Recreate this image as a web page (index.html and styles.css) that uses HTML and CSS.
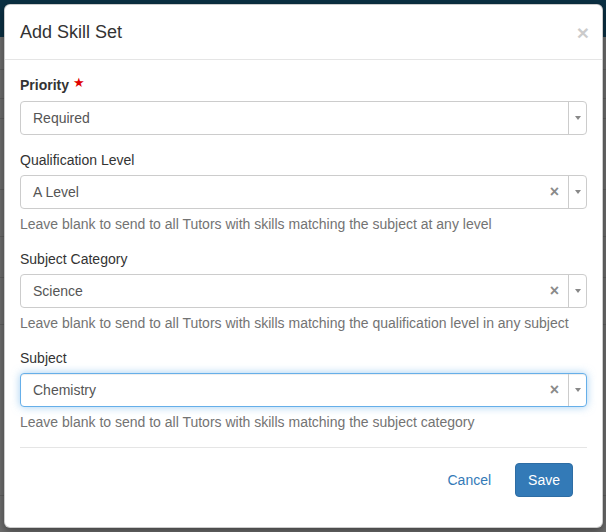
FILE: index.html
```html
<!DOCTYPE html>
<html lang="en">
<head>
<meta charset="utf-8">
<title>Add Skill Set</title>
<link rel="stylesheet" href="styles.css">
</head>
<body>
<div class="page">
  <div class="topbar"></div>
  <div class="rows">
    <div class="row r1"></div>
    <div class="row r2"></div>
    <div class="row r3"></div>
    <div class="row r4"></div>
    <div class="row r5"></div>
    <div class="row r6"></div>
    <div class="row r7"></div>
    <div class="row r8"></div>
  </div>
</div>

<div class="modal">
  <div class="modal-header">
    <h4 class="modal-title">Add Skill Set</h4>
    <span class="close">×</span>
  </div>
  <div class="modal-body">
    <div class="form-group">
      <label class="label bold">Priority <span class="req">★</span></label>
      <div class="select">
        <span class="value">Required</span>
        <span class="arrow"><i></i></span>
      </div>
    </div>
    <div class="form-group">
      <label class="label">Qualification Level</label>
      <div class="select">
        <span class="value">A Level</span>
        <span class="clear">×</span>
        <span class="arrow"><i></i></span>
      </div>
      <p class="help">Leave blank to send to all Tutors with skills matching the subject at any level</p>
    </div>
    <div class="form-group">
      <label class="label">Subject Category</label>
      <div class="select">
        <span class="value">Science</span>
        <span class="clear">×</span>
        <span class="arrow"><i></i></span>
      </div>
      <p class="help">Leave blank to send to all Tutors with skills matching the qualification level in any subject</p>
    </div>
    <div class="form-group">
      <label class="label">Subject</label>
      <div class="select focused">
        <span class="value">Chemistry</span>
        <span class="clear">×</span>
        <span class="arrow"><i></i></span>
      </div>
      <p class="help">Leave blank to send to all Tutors with skills matching the subject category</p>
    </div>
    <div class="modal-footer">
      <button class="btn btn-link">Cancel</button>
      <button class="btn btn-primary">Save</button>
    </div>
  </div>
</div>
</body>
</html>
```

FILE: styles.css
```css
html, body {
  margin: 0;
  padding: 0;
}
body {
  width: 606px;
  height: 532px;
  overflow: hidden;
  background: #6d6d6d;
  font-family: "Liberation Sans", Arial, Helvetica, sans-serif;
  font-size: 14px;
  line-height: 20px;
  color: #333;
  position: relative;
}
.page {
  display: flex;
  flex-direction: column;
}
.topbar {
  height: 37px;
  background: #0b3043;
}
.rows {
  display: flex;
  flex-direction: column;
}
.row {
  border-bottom: 1px solid #5f5f5f;
}
.r1 { height: 32px; }
.r2 { height: 28px; }
.r3 { height: 19px; }
.r4 { height: 70px; }
.r5 { height: 46px; }
.r6 { height: 40px; }
.r7 { height: 46px; }
.r8 { height: 170px; }

.modal {
  position: absolute;
  left: 4px;
  top: 4px;
  width: 597px;
  background: #fff;
  border: 1px solid rgba(0,0,0,0.2);
  border-radius: 6px;
  box-shadow: 0 3px 9px rgba(0,0,0,0.4);
}
.modal-header {
  display: flex;
  align-items: flex-start;
  justify-content: space-between;
  padding: 15px;
  border-bottom: 1px solid #e5e5e5;
}
.modal-title {
  margin: 0;
  font-size: 18px;
  line-height: 24px;
  font-weight: normal;
  color: #333;
}
.close {
  font-size: 21px;
  font-weight: bold;
  line-height: 20px;
  color: #000;
  opacity: 0.2;
  margin-top: 3px;
  margin-right: -2px;
}
.modal-body {
  padding: 15px 15px 15px;
}
.form-group {
  margin-bottom: 15px;
}
.label {
  display: block;
  margin-bottom: 5px;
  font-weight: normal;
  color: #333;
}
.label.bold {
  font-weight: bold;
}
.req {
  color: #e00000;
  font-size: 13px;
  position: relative;
  top: -3px;
  font-weight: normal;
}
.select {
  display: flex;
  align-items: stretch;
  height: 34px;
  box-sizing: border-box;
  border: 1px solid #ccc;
  border-radius: 4px;
  background: #fff;
}
.select.focused {
  border-color: #66afe9;
  box-shadow: inset 0 1px 1px rgba(0,0,0,0.075), 0 0 8px rgba(102,175,233,0.6);
}
.value {
  flex: 1;
  padding-left: 12px;
  line-height: 32px;
  color: #555;
}
.clear {
  font-weight: bold;
  color: #8a8a8a;
  font-size: 16px;
  line-height: 32px;
  padding-right: 9px;
}
.arrow {
  width: 17px;
  border-left: 1px solid #ccc;
  display: flex;
  align-items: center;
  justify-content: center;
}
.arrow i {
  width: 0;
  height: 0;
  border-left: 3px solid transparent;
  border-right: 3px solid transparent;
  border-top: 4px solid #888;
}
.help {
  margin: 5px 0 0;
  color: #737373;
}
.modal-footer {
  display: flex;
  justify-content: flex-end;
  align-items: center;
  gap: 10px;
  padding: 15px 14px 15px 15px;
  border-top: 1px solid #e5e5e5;
}
.btn {
  font-family: inherit;
  font-size: 14px;
  line-height: 20px;
  padding: 6px 12px;
  border: 1px solid transparent;
  border-radius: 4px;
  background: none;
  margin: 0;
}
.btn-link {
  color: #337ab7;
  margin-right: 1px;
}
.btn-primary {
  color: #fff;
  background: #337ab7;
  border-color: #2e6da4;
}
```
